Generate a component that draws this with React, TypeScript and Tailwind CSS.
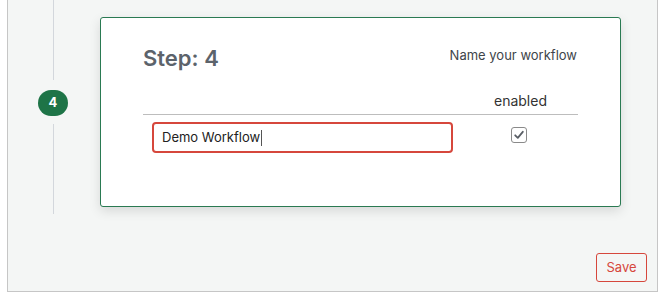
import React from "react";

export default function App() {
  return (
    <div className="w-[667px] h-[302px] bg-white" style={{ fontFamily: "Inter, 'Liberation Sans', sans-serif" }}>
      <div className="ml-[7px] w-[651px] h-[292px] border border-t-0 border-[#c6c6c6] bg-[#f4f6f5] flex flex-col">
        <div className="flex flex-row">
          <div className="w-[90px] flex flex-col items-center">
            <div className="w-px h-[80px] bg-[#d3d7dc]" />
            <div className="mt-[10px] w-[30px] h-[26px] rounded-full bg-[#1e7447] text-white text-[13px] font-bold flex items-center justify-center">4</div>
            <div className="mt-[8px] w-px h-[90px] bg-[#d3d7dc]" />
          </div>
          <div className="ml-[2px] mt-[17px] w-[521px] h-[190px] bg-white border border-[#2a7a52] rounded-[3px] shadow-[0_4px_12px_rgba(0,0,0,0.12)] px-[42px] pt-[26px]">
            <div className="flex flex-row justify-between items-start">
              <div className="text-[22px] leading-[28px] font-semibold text-[#5c636b]">Step: 4</div>
              <div className="text-[13px] leading-[16px] text-[#40454a] mt-[3px] mr-[1px]">Name your workflow</div>
            </div>
            <div className="flex flex-row justify-end mt-[20px]">
              <div className="w-[110px] text-center text-[14px] leading-[18px] text-[#333] pl-[9px] pr-[14px]">enabled</div>
            </div>
            <div className="mt-[4px] h-px bg-[#bdbdbd]" />
            <div className="flex flex-row items-center mt-[7px]">
              <div className="ml-[9px] w-[301px] h-[31px] border-2 border-[#d6473c] rounded-[4px] flex items-center pl-[8px] text-[13px] text-[#222]">
                Demo Workflow<span className="inline-block w-px h-[16px] bg-[#555] ml-px" />
              </div>
              <div className="flex-1 flex justify-end pr-[51px] mb-[6px]">
                <div className="w-[16px] h-[16px] border border-[#8a8a8a] rounded-[3px] bg-white flex items-center justify-center">
                  <svg width="12" height="12" viewBox="0 0 12 12">
                    <path d="M2.2 6.3 L4.8 8.8 L9.8 2.8" fill="none" stroke="#5a5f66" strokeWidth="1.8" strokeLinecap="round" strokeLinejoin="round" />
                  </svg>
                </div>
              </div>
            </div>
          </div>
        </div>
        <div className="flex-1 flex flex-row justify-end items-end pr-[10px] pb-[9px]">
          <button className="w-[51px] h-[29px] border border-[#d6473c] rounded-[3px] text-[#d6473c] text-[13px] bg-transparent">Save</button>
        </div>
      </div>
    </div>
  );
}
